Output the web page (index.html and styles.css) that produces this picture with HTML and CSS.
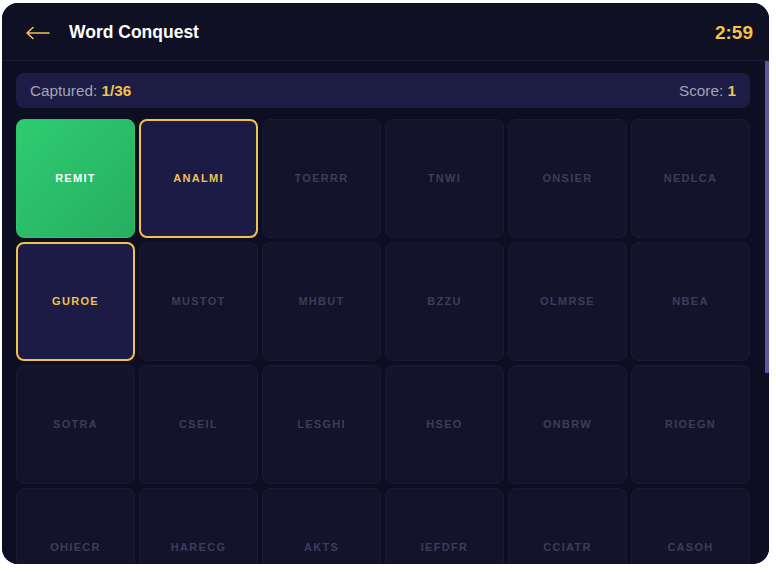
FILE: index.html
```html
<!DOCTYPE html>
<html lang="en">
<head>
<meta charset="utf-8">
<title>Word Conquest</title>
<link rel="stylesheet" href="styles.css">
</head>
<body>
<div class="app">
  <header class="topbar">
    <div class="left">
      <span class="back" aria-label="Back">
        <svg width="25" height="14" viewBox="0 0 25 14"><path d="M24 7H2M8 1.5L2 7l6 5.5" fill="none" stroke="#f2c14e" stroke-width="1.6" stroke-linecap="round" stroke-linejoin="round"/></svg>
      </span>
      <h1 class="title">Word Conquest</h1>
    </div>
    <div class="timer">2:59</div>
  </header>
  <div class="body-row">
    <main class="board-wrap">
      <div class="stats">
        <span class="stat">Captured: <b>1/36</b></span>
        <span class="stat">Score: <b>1</b></span>
      </div>
      <div class="grid">
        <div class="tile captured">REMIT</div>
        <div class="tile open">ANALMI</div>
        <div class="tile">TOERRR</div>
        <div class="tile">TNWI</div>
        <div class="tile">ONSIER</div>
        <div class="tile">NEDLCA</div>
        <div class="tile open">GUROE</div>
        <div class="tile">MUSTOT</div>
        <div class="tile">MHBUT</div>
        <div class="tile">BZZU</div>
        <div class="tile">OLMRSE</div>
        <div class="tile">NBEA</div>
        <div class="tile">SOTRA</div>
        <div class="tile">CSEIL</div>
        <div class="tile">LESGHI</div>
        <div class="tile">HSEO</div>
        <div class="tile">ONBRW</div>
        <div class="tile">RIOEGN</div>
        <div class="tile">OHIECR</div>
        <div class="tile">HARECG</div>
        <div class="tile">AKTS</div>
        <div class="tile">IEFDFR</div>
        <div class="tile">CCIATR</div>
        <div class="tile">CASOH</div>
        <div class="tile">LPTEAN</div>
        <div class="tile">RIVDE</div>
        <div class="tile">GLOTH</div>
        <div class="tile">YNAPR</div>
        <div class="tile">TSERAF</div>
        <div class="tile">MULEB</div>
        <div class="tile">CKROT</div>
        <div class="tile">NDIAW</div>
        <div class="tile">SPERHA</div>
        <div class="tile">LGEAT</div>
        <div class="tile">BROMDE</div>
        <div class="tile">FITSL</div>
      </div>
    </main>
    <div class="scrolltrack"><div class="thumb"></div></div>
  </div>
</div>
</body>
</html>
```
FILE: styles.css
```css
* { box-sizing: border-box; }
html, body { margin: 0; padding: 0; background: #ffffff; }
body { font-family: "Liberation Sans", Arial, sans-serif; }

.app {
  margin: 3px 7px 0 2px;
  width: 767px;
  height: 561px;
  border-radius: 16px;
  overflow: hidden;
  background: #0e0e22;
  display: flex;
  flex-direction: column;
}

.topbar {
  flex: 0 0 58px;
  display: flex;
  align-items: center;
  justify-content: space-between;
  padding: 2px 16px 0 23px;
  background: #0f1024;
  border-bottom: 1px solid #1b1c36;
}
.left { display: flex; align-items: center; gap: 19px; }
.back { display: flex; align-items: center; height: 14px; }
.title {
  margin: 0;
  font-size: 17.5px;
  font-weight: 700;
  color: #ffffff;
}
.timer {
  font-size: 19px;
  font-weight: 700;
  color: #f2c14e;
}

.body-row {
  flex: 1 1 auto;
  min-height: 0;
  display: flex;
}
.board-wrap {
  flex: 1 1 auto;
  min-width: 0;
  overflow: hidden;
  padding: 12px 14px 16px 14px;
  background: #0e0e22;
}
.scrolltrack {
  flex: 0 0 5px;
  background: #0e0e22;
  padding-left: 1px;
}
.thumb {
  height: 312px;
  background: #5a59a0;
  border-radius: 1px;
}

.stats {
  height: 35px;
  margin-bottom: 11px;
  display: flex;
  align-items: center;
  justify-content: space-between;
  padding: 0 14px;
  background: #1c1c44;
  border-radius: 8px;
  font-size: 15.3px;
  color: #a3a3ba;
}
.stat b { color: #f2c14e; font-weight: 700; }

.grid {
  display: grid;
  grid-template-columns: repeat(6, 1fr);
  gap: 4px;
}
.tile {
  aspect-ratio: 1 / 1;
  display: flex;
  align-items: center;
  justify-content: center;
  border-radius: 8px;
  background: #13132b;
  border: 1px solid #1a1a36;
  color: #3d3d5a;
  font-size: 11px;
  font-weight: 700;
  letter-spacing: 1.3px;
  padding-bottom: 1px;
}
.tile.captured {
  background: linear-gradient(135deg, #2ecc71 0%, #27ae60 100%);
  border: 1px solid #2fc46c;
  color: #ffffff;
}
.tile.open {
  background: #1c1b45;
  border: 2px solid #f2c14e;
  color: #f2c14e;
}
```
